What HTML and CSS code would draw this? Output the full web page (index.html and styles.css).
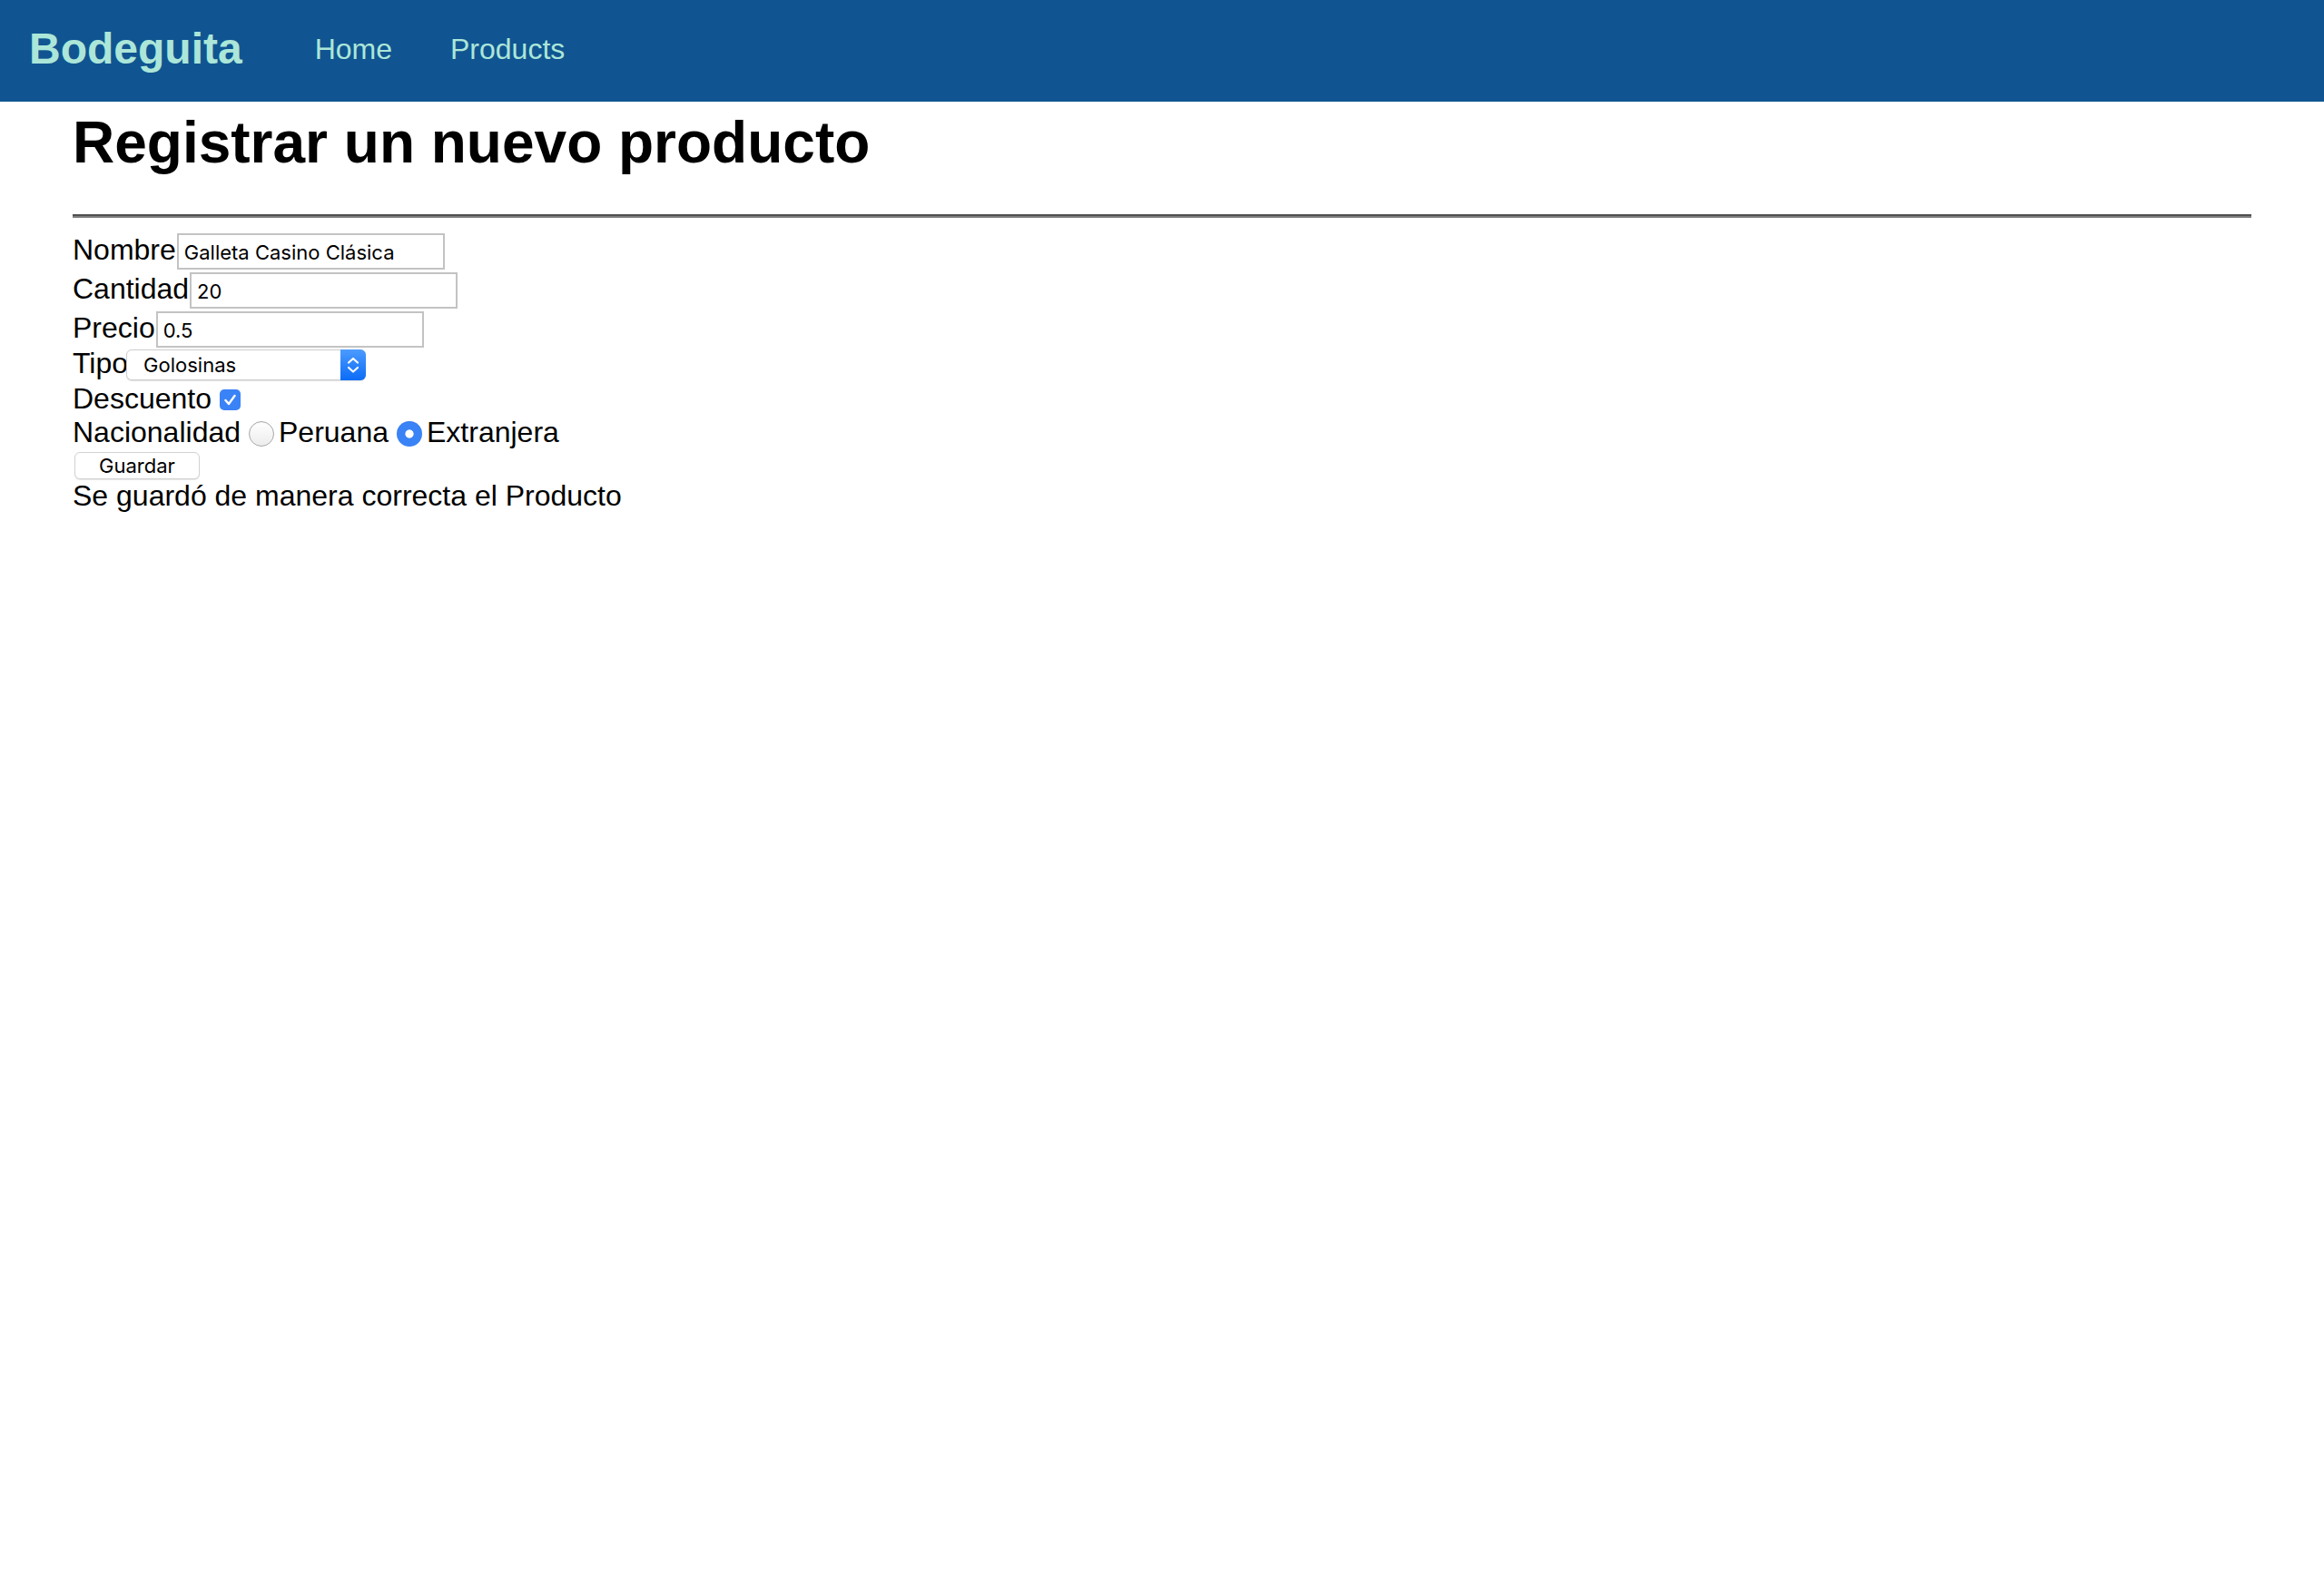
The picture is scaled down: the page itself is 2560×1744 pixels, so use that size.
FILE: index.html
```html
<!DOCTYPE html>
<html lang="es">
<head>
<meta charset="utf-8">
<title>Bodeguita</title>
<link rel="stylesheet" href="styles.css">
</head>
<body>
<nav class="navbar">
  <a class="brand" href="#">Bodeguita</a>
  <a class="nav-link" href="#">Home</a>
  <a class="nav-link" href="#">Products</a>
</nav>
<main class="container">
  <h1 class="title">Registrar un nuevo producto</h1>
  <hr class="divider">
  <form class="form">
    <div class="row row-input"><label class="lbl" for="nombre">Nombre</label><input class="txt" id="nombre" type="text" value="Galleta Casino Clásica"></div>
    <div class="row row-input"><label class="lbl" for="cantidad">Cantidad</label><input class="txt" id="cantidad" type="text" value="20"></div>
    <div class="row row-last-input"><label class="lbl" for="precio">Precio</label><input class="txt" id="precio" type="text" value="0.5"></div>
    <div class="row row-select"><label class="lbl" for="tipo">Tipo</label><span class="select-wrap"><select class="sel" id="tipo"><option>Golosinas</option></select><span class="sel-arrow"><svg width="28" height="34" viewBox="0 0 28 34"><path d="M9 14.5 L14 10 L19 14.5" fill="none" stroke="#fff" stroke-width="2.2" stroke-linecap="round" stroke-linejoin="round"/><path d="M9 20 L14 24.5 L19 20" fill="none" stroke="#fff" stroke-width="2.2" stroke-linecap="round" stroke-linejoin="round"/></svg></span></span></div>
    <div class="row"><label class="lbl" for="descuento">Descuento</label><span class="check"><input class="check-input" id="descuento" type="checkbox" checked><svg class="check-mark" width="23" height="23" viewBox="0 0 23 23"><path d="M6.5 12 L10 16 L16.5 7" fill="none" stroke="#fff" stroke-width="2.4" stroke-linecap="round" stroke-linejoin="round"/></svg></span></div>
    <div class="row"><span class="lbl">Nacionalidad</span><input class="radio" type="radio" name="nac" id="peruana"><label class="opt" for="peruana">Peruana</label><input class="radio" type="radio" name="nac" id="extranjera" checked><label class="opt" for="extranjera">Extranjera</label></div>
    <div class="row row-btn"><button class="btn" type="button">Guardar</button></div>
    <div class="row"><span class="msg">Se guardó de manera correcta el Producto</span></div>
  </form>
</main>
</body>
</html>
```

FILE: styles.css
```css
html, body {
  margin: 0;
  padding: 0;
  background: #ffffff;
}

body {
  font-family: "Liberation Sans", Arial, Helvetica, sans-serif;
  color: #000;
}

.navbar {
  height: 112px;
  background: #105591;
  display: flex;
  align-items: center;
  padding: 0 32px;
  box-sizing: border-box;
}

.brand {
  font-size: 48px;
  font-weight: bold;
  color: #ace6d9;
  text-decoration: none;
  margin-right: 48px;
  line-height: 56px;
  padding-bottom: 4px;
}

.nav-link {
  font-size: 32px;
  color: #ace6d9;
  text-decoration: none;
  padding: 0 32px 5px;
  line-height: 40px;
}

.container {
  margin: 0 80px;
}

.title {
  font-size: 64px;
  font-weight: bold;
  line-height: 74px;
  margin: 8px 0 0;
}

.divider {
  margin: 42px 0 17px;
  border: 0;
  border-top: 2px solid #505050;
  border-bottom: 2px solid #7d7d7d;
  height: 0;
}

.form {
  display: flex;
  flex-direction: column;
}

.row {
  display: flex;
  align-items: flex-start;
  font-size: 32px;
  line-height: 37px;
}

.row-input {
  height: 40px;
  margin-bottom: 3px;
}

.row-last-input {
  height: 40px;
  margin-bottom: -1.5px;
}

.row-select {
  height: 39.5px;
}

.lbl {
  font-size: 32px;
  line-height: 37px;
  white-space: nowrap;
}

.txt {
  box-sizing: border-box;
  width: 295px;
  height: 40px;
  margin: 0 0 0 1px;
  border: 2px solid #c3c3c3;
  border-radius: 0;
  padding: 2px 6px 0;
  font-family: Inter, "Noto Sans", sans-serif;
  font-size: 22px;
  line-height: 36px;
  color: #000;
  background: #fff;
  outline: none;
}

.select-wrap {
  position: relative;
  display: block;
  margin: 3.5px 0 0 -2px;
  width: 264px;
  height: 34px;
}

.sel {
  appearance: none;
  -webkit-appearance: none;
  display: block;
  box-sizing: border-box;
  width: 264px;
  height: 34px;
  margin: 0;
  border: 1px solid #cdcdcd;
  border-radius: 6px;
  background: #fff;
  box-shadow: 0 1px 1px rgba(0, 0, 0, 0.12);
  padding: 0 0 0 18px;
  font-family: Inter, "Noto Sans", sans-serif;
  font-size: 22px;
  line-height: 32px;
  color: #000;
}

.sel-arrow {
  position: absolute;
  top: 0;
  right: 0;
  width: 28px;
  height: 34px;
  border-radius: 0 6px 6px 0;
  background: linear-gradient(#4c9bff, #0b6cf7);
  display: flex;
}

.check {
  position: relative;
  display: block;
  width: 23px;
  height: 23px;
  margin: 8px 0 0 9px;
}

.check-input {
  appearance: none;
  -webkit-appearance: none;
  margin: 0;
  width: 23px;
  height: 23px;
  border-radius: 5px;
  background: #3a83f6;
  display: block;
}

.check-mark {
  position: absolute;
  top: 0;
  left: 0;
  pointer-events: none;
}

.radio {
  appearance: none;
  -webkit-appearance: none;
  box-sizing: border-box;
  width: 28px;
  height: 28px;
  margin: 6px 5px 0 9px;
  border-radius: 50%;
  border: 1.5px solid #a9a9a9;
  background: linear-gradient(#ffffff, #ececec);
  box-shadow: inset 0 1px 1px rgba(0, 0, 0, 0.05);
}

.radio:checked {
  border: 0;
  background: radial-gradient(circle, #ffffff 0, #ffffff 4.2px, #3a83f6 5px);
}

.opt {
  white-space: nowrap;
}

.row-btn {
  height: 33px;
}

.btn {
  box-sizing: border-box;
  width: 138px;
  height: 30px;
  margin: 3px 0 0 2px;
  padding: 0;
  border: 1px solid #d2d2d2;
  border-radius: 6px;
  background: #fff;
  box-shadow: 0 1px 1px rgba(0, 0, 0, 0.1);
  font-family: Inter, "Noto Sans", sans-serif;
  font-size: 22px;
  line-height: 28px;
  color: #000;
}

.msg {
  white-space: nowrap;
}
```
